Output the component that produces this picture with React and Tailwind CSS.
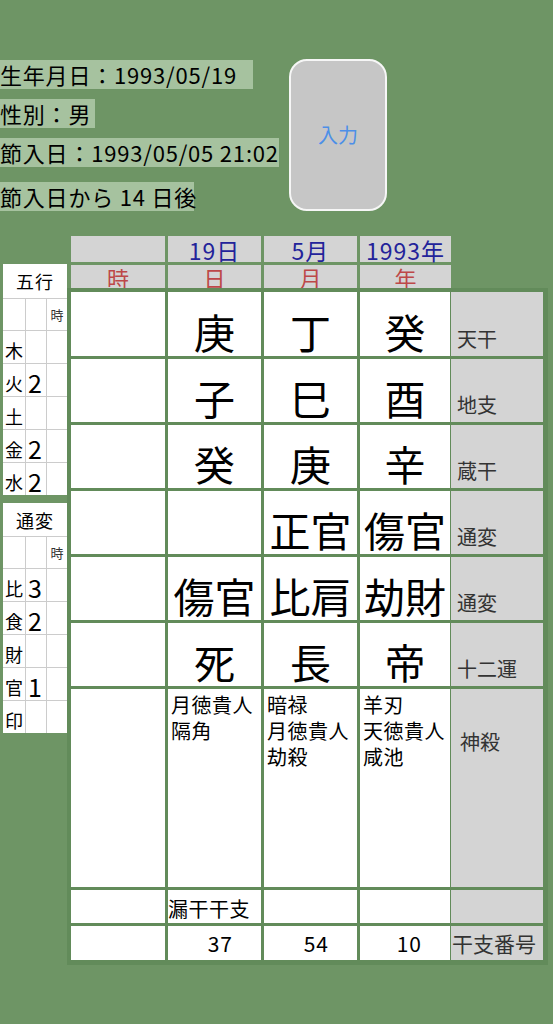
import React from 'react';

const jp = "font-['Noto_Sans_CJK_JP',sans-serif]";

const bodyRows = [
  { cells: ['', '庚', '丁', '癸'], label: '天干' },
  { cells: ['', '子', '巳', '酉'], label: '地支' },
  { cells: ['', '癸', '庚', '辛'], label: '蔵干' },
  { cells: ['', '', '正官', '傷官'], label: '通変' },
  { cells: ['', '傷官', '比肩', '劫財'], label: '通変' },
  { cells: ['', '死', '長', '帝'], label: '十二運' },
];

const shensha = [[], ['月徳貴人', '隔角'], ['暗禄', '月徳貴人', '劫殺'], ['羊刃', '天徳貴人', '咸池']];

function SmallTable({ title, headH, rowH, rows }) {
  return (
    <div className="w-[64px] bg-[#cccccc] flex flex-col gap-px">
      <div className={`${headH} bg-white flex items-center justify-center text-[18px] leading-none tracking-[1px]`}>{title}</div>
      <div className="grid grid-cols-[22px_20px_20px] gap-px">
        <div className="h-[31px] bg-white" />
        <div className="h-[31px] bg-white" />
        <div className="h-[31px] bg-white flex items-center justify-center text-[13px] leading-none text-[#333]">時</div>
        {rows.map(([k, n]) => (
          <React.Fragment key={k}>
            <div className={`${rowH} bg-white flex items-end pl-[2px] pb-[4px] text-[18px] leading-none`}>{k}</div>
            <div className={`${rowH} bg-white flex items-end pl-[2px] pb-[1px] text-[25px] leading-none`}>{n}</div>
            <div className={`${rowH} bg-white`} />
          </React.Fragment>
        ))}
      </div>
    </div>
  );
}

export default function App() {
  return (
    <div className={`min-h-screen w-[553px] bg-[#6e9565] text-black ${jp}`}>
      <div className="flex pt-[59px]">
        <div className="flex flex-col w-[289px] text-[22px] leading-[29px] tracking-[0.8px]">
          <div className="mt-[1px] h-[29px] w-[253px] bg-[#a6c29f] whitespace-nowrap">生年月日：1993/05/19</div>
          <div className="mt-[10px] h-[29px] w-[95px] bg-[#a6c29f] whitespace-nowrap">性別：男</div>
          <div className="mt-[10px] h-[29px] w-[279px] bg-[#a6c29f] whitespace-nowrap">節入日：1993/05/05 21:02</div>
          <div className="mt-[15px] h-[29px] w-[194px] bg-[#a6c29f] whitespace-nowrap">節入日から 14 日後</div>
        </div>
        <button className="w-[98px] h-[152px] rounded-[18px] border-2 border-[#f6f6f6] bg-[#c6c6c6] text-[#4d8fe8] text-[20px] leading-none">入力</button>
      </div>

      <div className="mt-[25px] flex">
        <div className="w-[67px] pl-[3px] pt-[28px] flex flex-col gap-[8px]">
          <SmallTable title="五行" headH="h-[34px]" rowH="h-[32px]" rows={[['木', ''], ['火', '2'], ['土', ''], ['金', '2'], ['水', '2']]} />
          <SmallTable title="通変" headH="h-[33px]" rowH="h-[32px]" rows={[['比', '3'], ['食', '2'], ['財', ''], ['官', '1'], ['印', '']]} />
        </div>

        <div className="flex flex-col">
          <div className="ml-[4px] grid grid-cols-[94px_93px_93px_91px] grid-rows-[26px_23px] gap-[3px]">
            {['', '19日', '5月', '1993年'].map((t, i) => (
              <div key={i} className="bg-[#d4d4d4] flex items-end justify-center text-[23px] leading-[24px] tracking-[1px] text-[#23239a] whitespace-nowrap">{t}</div>
            ))}
            {['時', '日', '月', '年'].map((t) => (
              <div key={t} className="bg-[#d4d4d4] flex items-center justify-center text-[22px] leading-none text-[#bd4848]">{t}</div>
            ))}
          </div>

          <div className="bg-[#628b5a] pt-[4px] pl-[4px] pr-[5px] pb-[5px]">
            <div className="grid grid-cols-[94px_93px_93px_90px_90px] grid-rows-[64px_63px_63px_63px_63px_63px_198px_33px_34px] gap-[3px]">
              {bodyRows.map((r, ri) => (
                <React.Fragment key={ri}>
                  {r.cells.map((c, ci) => (
                    <div key={ci} className="bg-white flex items-end justify-center pb-[4px] text-[41px] leading-none whitespace-nowrap">{c}</div>
                  ))}
                  <div className="-ml-[2px] w-[92px] bg-[#d4d4d4] flex items-end pl-[6px] pb-[7px] text-[20px] leading-none text-[#333]">{r.label}</div>
                </React.Fragment>
              ))}

              {shensha.map((lines, i) => (
                <div key={i} className="bg-white pl-[3px] pt-[3px] text-[20px] leading-[26px] tracking-[0.5px]">
                  {lines.map((l) => (
                    <div key={l}>{l}</div>
                  ))}
                </div>
              ))}
              <div className="-ml-[2px] w-[92px] bg-[#d4d4d4] pl-[9px] pt-[43px] text-[20px] leading-none text-[#333]">神殺</div>

              <div className="bg-white" />
              <div className="bg-white flex items-end pb-[4px] text-[20px] leading-none tracking-[0.5px] whitespace-nowrap">漏干干支</div>
              <div className="bg-white" />
              <div className="bg-white" />
              <div className="-ml-[2px] w-[92px] bg-[#d4d4d4]" />

              <div className="bg-white" />
              {['37', '54', '10'].map((n) => (
                <div key={n} className="bg-white flex items-end justify-end pr-[28px] pb-[6px] text-[21px] leading-none tracking-[1px]">{n}</div>
              ))}
              <div className="-ml-[2px] w-[92px] bg-[#d4d4d4] flex items-end pl-[1px] pb-[6px] text-[21px] leading-none text-[#333] whitespace-nowrap">干支番号</div>
            </div>
          </div>
        </div>
      </div>
    </div>
  );
}
